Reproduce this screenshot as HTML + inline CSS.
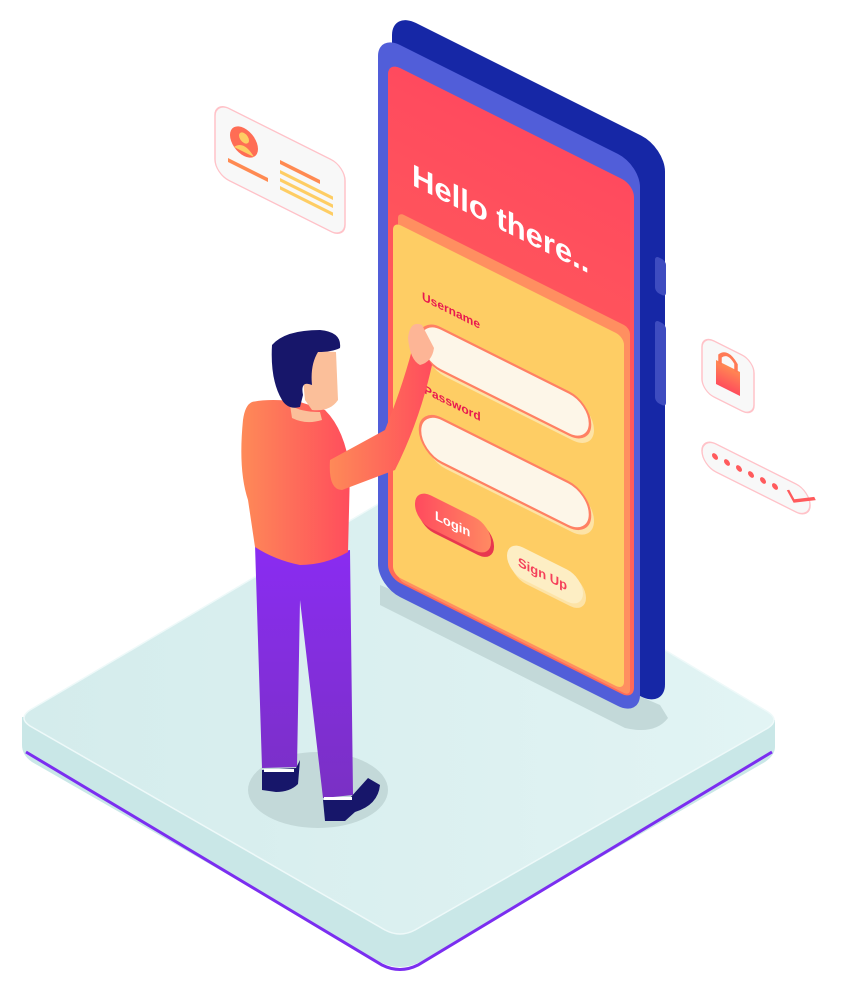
<!DOCTYPE html>
<html><head><meta charset="utf-8"><style>
html,body{margin:0;padding:0;background:#fff;width:841px;height:988px;overflow:hidden}
svg{display:block}
text{font-family:"Liberation Sans",sans-serif;font-weight:bold}
</style></head><body>
<svg width="841" height="988" viewBox="0 0 841 988" xmlns="http://www.w3.org/2000/svg">
<defs>
<linearGradient id="plat" x1="0" x2="1"><stop offset="0" stop-color="#d4ecec"/><stop offset="1" stop-color="#e2f4f4"/></linearGradient>
<linearGradient id="red" x1="0" y1="0" x2="0" y2="1"><stop offset="0" stop-color="#ff4a5e"/><stop offset="1" stop-color="#ff6a58"/></linearGradient>
<linearGradient id="shirt" x1="0" x2="1"><stop offset="0" stop-color="#fe8a58"/><stop offset="1" stop-color="#ff4d5c"/></linearGradient>
<linearGradient id="pants" x1="0" y1="0" x2="0" y2="1"><stop offset="0" stop-color="#8a2cf2"/><stop offset="1" stop-color="#7a30c4"/></linearGradient>
<linearGradient id="btn" x1="0" x2="1"><stop offset="0" stop-color="#ff4a5e"/><stop offset="1" stop-color="#ff8a62"/></linearGradient>
<linearGradient id="lock" x1="0" y1="0" x2="0" y2="1"><stop offset="0" stop-color="#ff8a52"/><stop offset="1" stop-color="#ff4d5c"/></linearGradient>
</defs>

<!-- platform -->
<path d="M22,717 L22,745 Q22,755 32,762 L380,962 Q400,972 420,962 L765,762 Q775,755 775,747 L775,720 Z" fill="#c9e7e7"/>
<path d="M26,752 L382,965 Q400,974 418,965 L772,752" fill="none" stroke="#7b2ef0" stroke-width="3"/>
<path d="M30,710 L385,500 Q400,492 415,500 L768,712 Q780,720 768,728 L415,930 Q400,938 385,930 L30,726 Q18,718 30,710 Z" fill="url(#plat)" stroke="#eef9f9" stroke-width="1.5"/>

<!-- phone shadow -->
<path d="M380,585 L380,605 L625,728 Q655,735 668,718 L660,705 Z" fill="#c3d9d9"/>
<!-- person shadow -->
<ellipse cx="318" cy="790" rx="70" ry="38" fill="#c3d9d9"/>

<!-- phone -->
<g transform="matrix(1,0.5,0,1,0,0)">
 <rect x="392" y="-185" width="273" height="561" rx="24" fill="#1627a6"/>
 <rect x="378" y="-155" width="262" height="552" rx="22" fill="#515ed9"/>
 <rect x="655" y="-72" width="11" height="36" rx="4" fill="#3e4cc0"/>
 <rect x="655" y="-8" width="11" height="82" rx="4" fill="#3e4cc0"/>
 <rect x="388" y="-132" width="246" height="515" rx="12" fill="url(#red)"/>
 <rect x="398" y="13" width="232" height="368" rx="6" fill="#ff8f60"/>
 <rect x="393" y="25" width="231" height="353" rx="8" fill="#fecd64"/>
 <text x="412" y="-21" font-size="31" fill="#fff">Hello there..</text>
 <text x="422" y="89" font-size="12" fill="#e8194f">Username</text>
 <rect x="424" y="112" width="170" height="42" rx="21" fill="#fde3a6"/>
 <rect x="420" y="108" width="170" height="42" rx="21" fill="#fdf6e8" stroke="#ff8063" stroke-width="2.5"/>
 <text x="424" y="181" font-size="12" fill="#e8194f">Password</text>
 <rect x="424" y="202" width="170" height="44" rx="22" fill="#fde3a6"/>
 <rect x="420" y="198" width="170" height="44" rx="22" fill="#fdf6e8" stroke="#ff8063" stroke-width="2.5"/>
 <rect x="418" y="283" width="76" height="33" rx="16" fill="#e8374f"/>
 <rect x="415" y="280" width="76" height="33" rx="16" fill="url(#btn)"/>
 <text x="435" y="302" font-size="13" fill="#fff">Login</text>
 <rect x="510" y="289" width="76" height="32" rx="16" fill="#fde3a6"/>
 <rect x="507" y="286" width="76" height="32" rx="16" fill="#fdeec4"/>
 <text x="518" y="307" font-size="13" fill="#f5405a">Sign Up</text>

 <!-- ID card -->
 <rect x="215" y="-6" width="130" height="72" rx="14" fill="#f8f8f8" stroke="#ffc2c8" stroke-width="1.5"/>
 <circle cx="244" cy="20" r="14" fill="#ff6d55"/>
 <circle cx="244" cy="16" r="5" fill="#fecd64"/>
 <path d="M234,30 Q244,18 254,30" fill="#fecd64"/>
 <rect x="228" y="44" width="40" height="4" fill="#ff8a52"/>
 <rect x="280" y="20" width="40" height="4" fill="#ff8a52"/>
 <rect x="280" y="30" width="53" height="3.5" fill="#fecd64"/>
 <rect x="280" y="38" width="53" height="3.5" fill="#fecd64"/>
 <rect x="280" y="46" width="53" height="3.5" fill="#fecd64"/>

 <!-- lock card -->
 <rect x="702" y="-16" width="52" height="56" rx="12" fill="#f8f8f8" stroke="#ffc2c8" stroke-width="1.5"/>
 <rect x="716" y="2" width="24" height="24" fill="url(#lock)"/>
 <path d="M720,4 L720,-4 Q728,-14 736,-4 L736,4" fill="none" stroke="#ff7a55" stroke-width="3.5"/>

 <!-- dots card -->
 <rect x="702" y="86" width="108" height="28" rx="14" fill="#f8f8f8" stroke="#ffc2c8" stroke-width="1.5"/>
 <g fill="#ff5a5c">
  <circle cx="715" cy="99" r="3"/><circle cx="727" cy="99" r="3"/><circle cx="739" cy="99" r="3"/>
  <circle cx="751" cy="99" r="3"/><circle cx="763" cy="99" r="3"/><circle cx="775" cy="99" r="3"/>
 </g>
 <path d="M788,96 L794,104 L815,91" fill="none" stroke="#ff5a5c" stroke-width="3"/>
</g>

<!-- person: pants -->
<path d="M255,545 Q300,560 350,550 L353,795 L323,798 L300,600 L297,767 L262,768 Z" fill="url(#pants)"/>
<!-- shoes -->
<path d="M262,770 L296,768 L300,760 L298,784 Q290,792 276,792 L262,790 Z" fill="#17166a"/>
<rect x="264" y="769" width="30" height="3" fill="#fff"/>
<path d="M323,800 L350,798 L368,778 L380,785 Q378,805 355,812 L345,821 L325,821 Z" fill="#17166a"/>
<rect x="324" y="797" width="28" height="3" fill="#fff"/>
<!-- torso -->
<path d="M252,402 Q270,398 300,402 L325,410 Q345,430 350,470 L348,552 Q325,565 300,565 Q275,560 255,547 L248,500 Q238,470 243,420 Q245,405 252,402 Z" fill="url(#shirt)"/>
<!-- arm -->
<path d="M330,460 Q328,490 342,490 L395,470 Q420,420 432,365 L415,338 Q405,380 385,430 Z" fill="url(#shirt)"/>
<path d="M408,338 Q410,320 422,325 L434,348 Q432,362 420,365 Q410,360 408,338 Z" fill="#fdb596"/>
<!-- head -->
<path d="M300,350 L336,352 L338,400 Q330,412 312,410 L305,400 Z" fill="#fbbf9a"/>
<path d="M290,405 Q300,412 320,412 L322,420 Q306,425 292,418 Z" fill="#fbbf9a"/>
<path d="M272,345 Q285,330 320,330 Q342,332 340,348 Q332,352 318,352 Q310,365 312,385 Q300,380 303,395 L300,407 Q288,410 282,400 Q270,380 272,345 Z" fill="#17166a"/>
</svg>
</body></html>
